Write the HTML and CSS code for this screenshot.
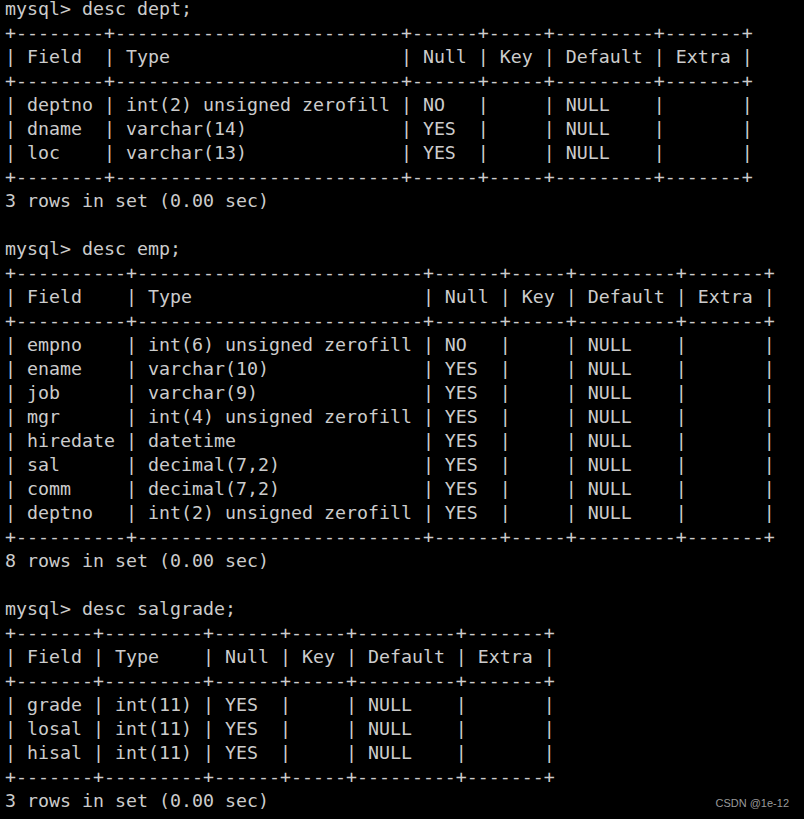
FILE: index.html
```html
<!DOCTYPE html>
<html>
<head>
<meta charset="utf-8">
<link rel="stylesheet" href="styles.css">
</head>
<body>
<pre class="term">mysql&gt; desc dept;
+--------+--------------------------+------+-----+---------+-------+
| Field  | Type                     | Null | Key | Default | Extra |
+--------+--------------------------+------+-----+---------+-------+
| deptno | int(2) unsigned zerofill | NO   |     | NULL    |       |
| dname  | varchar(14)              | YES  |     | NULL    |       |
| loc    | varchar(13)              | YES  |     | NULL    |       |
+--------+--------------------------+------+-----+---------+-------+
3 rows in set (0.00 sec)

mysql&gt; desc emp;
+----------+--------------------------+------+-----+---------+-------+
| Field    | Type                     | Null | Key | Default | Extra |
+----------+--------------------------+------+-----+---------+-------+
| empno    | int(6) unsigned zerofill | NO   |     | NULL    |       |
| ename    | varchar(10)              | YES  |     | NULL    |       |
| job      | varchar(9)               | YES  |     | NULL    |       |
| mgr      | int(4) unsigned zerofill | YES  |     | NULL    |       |
| hiredate | datetime                 | YES  |     | NULL    |       |
| sal      | decimal(7,2)             | YES  |     | NULL    |       |
| comm     | decimal(7,2)             | YES  |     | NULL    |       |
| deptno   | int(2) unsigned zerofill | YES  |     | NULL    |       |
+----------+--------------------------+------+-----+---------+-------+
8 rows in set (0.00 sec)

mysql&gt; desc salgrade;
+-------+---------+------+-----+---------+-------+
| Field | Type    | Null | Key | Default | Extra |
+-------+---------+------+-----+---------+-------+
| grade | int(11) | YES  |     | NULL    |       |
| losal | int(11) | YES  |     | NULL    |       |
| hisal | int(11) | YES  |     | NULL    |       |
+-------+---------+------+-----+---------+-------+
3 rows in set (0.00 sec)</pre>
<div class="mark">CSDN @1e-12</div>
</body>
</html>
```
FILE: styles.css
```css
html, body {
  margin: 0;
  padding: 0;
  background: #000;
  height: 100%;
  overflow: hidden;
}
body {
  position: relative;
}
.term {
  width: max-content;
  margin: -3px 0 0 0;
  padding: 0 0 0 5px;
  font-family: "DejaVu Sans Mono", "Liberation Mono", monospace;
  font-size: 18.27px;
  line-height: 24px;
  color: #cccccc;
  white-space: pre;
}
.mark {
  position: absolute;
  right: 15px;
  top: 797px;
  font-family: "Liberation Sans", Arial, sans-serif;
  font-size: 11px;
  color: #9a9a9a;
}
```
